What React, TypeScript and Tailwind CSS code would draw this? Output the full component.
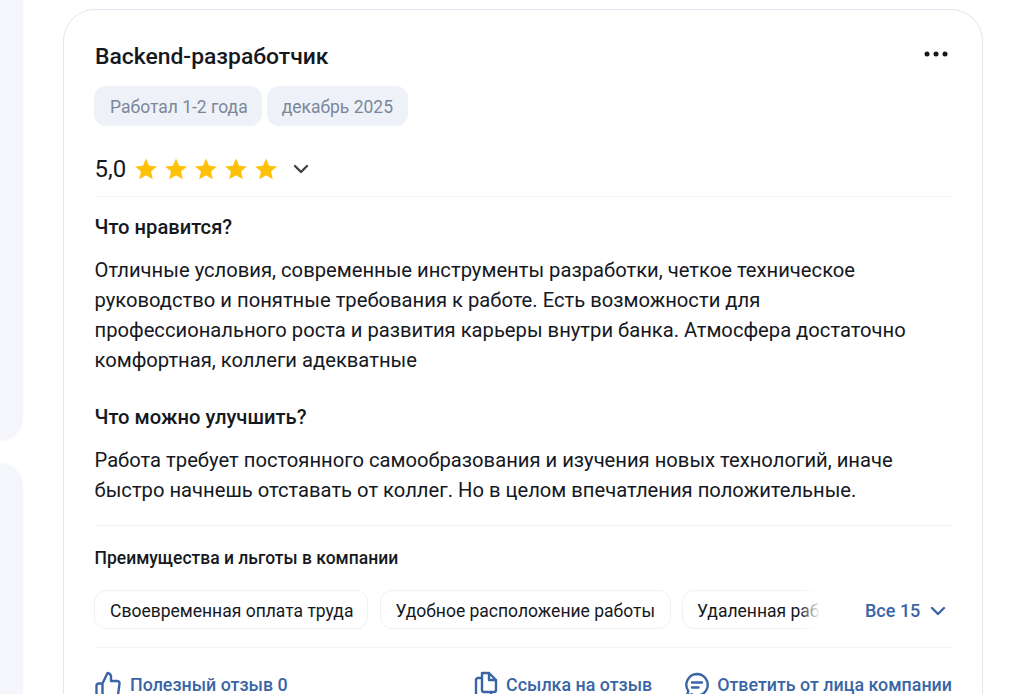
import React from 'react';

const Star: React.FC = () => (
  <svg width="24" height="24" viewBox="0 0 24 24" className="shrink-0 mr-[6px]">
    <path d="M12 1.6l3.1 7.2 7.8.7-5.9 5.1 1.8 7.6L12 18.2l-6.8 4 1.8-7.6-5.9-5.1 7.8-.7z" fill="#ffc107" />
  </svg>
);

const Chevron: React.FC<{ color: string }> = ({ color }) => (
  <svg width="16" height="10" viewBox="0 0 16 10" fill="none">
    <path d="M2 2l6 6 6-6" stroke={color} strokeWidth="2.4" strokeLinecap="round" strokeLinejoin="round" />
  </svg>
);

const Chip: React.FC<{ children: React.ReactNode; className?: string }> = ({ children, className }) => (
  <div className={`h-[39px] shrink-0 rounded-[12px] border border-[#eef1f8] flex items-center text-[17.5px] pt-[3px] text-[#15181e] whitespace-nowrap ${className ?? ''}`}>
    {children}
  </div>
);

const App: React.FC = () => {
  return (
    <div className="h-[694px] w-full overflow-hidden bg-white flex font-['Roboto',sans-serif] text-[#15181e]">
      <div className="w-[23px] shrink-0 flex flex-col gap-[22px]">
        <div className="h-[441px] shrink-0 bg-[#f4f6fb] rounded-br-[24px]" />
        <div className="flex-1 bg-[#f4f6fb] rounded-tr-[24px]" />
      </div>

      <div className="ml-[40px] mt-[9px] w-[920px] h-[760px] shrink-0 border border-[#e1e5ef] rounded-[32px] pl-[31px] pr-[30px] pt-[30px]">
        <div className="flex items-start justify-between">
          <div className="text-[22.9px] leading-[34px] font-medium">Backend-разработчик</div>
          <svg width="24" height="6" viewBox="0 0 24 6" className="mr-[4px] mt-[11px]">
            <circle cx="3" cy="3" r="2.5" fill="#15181e" />
            <circle cx="12" cy="3" r="2.5" fill="#15181e" />
            <circle cx="21" cy="3" r="2.5" fill="#15181e" />
          </svg>
        </div>

        <div className="flex gap-[5px] mt-[12px] -ml-px">
          <div className="h-[40px] rounded-[12px] bg-[#eef1f8] pl-[16px] pr-[14px] pt-[2px] flex items-center text-[17.5px] text-[#7b8799]">Работал 1-2 года</div>
          <div className="h-[40px] rounded-[12px] bg-[#eef1f8] px-[15px] pt-[2px] flex items-center text-[17.5px] text-[#7b8799]">декабрь 2025</div>
        </div>

        <div className="flex items-center mt-[26px] h-[34px]">
          <span className="text-[24px] mr-[8px] -ml-[0.5px]">5,0</span>
          <Star /><Star /><Star /><Star /><Star />
          <span className="ml-[9px] flex"><Chevron color="#3f4349" /></span>
        </div>

        <div className="h-px bg-[#f1f3f8] mt-[10px]" />

        <div className="text-[20.2px] leading-[30px] font-medium mt-[15px] -ml-[0.5px]">Что нравится?</div>
        <p className="text-[20.2px] leading-[30px] mt-[13px] -ml-[0.5px]">
          Отличные условия, современные инструменты разработки, четкое техническое<br />
          руководство и понятные требования к работе. Есть возможности для<br />
          профессионального роста и развития карьеры внутри банка. Атмосфера достаточно<br />
          комфортная, коллеги адекватные
        </p>

        <div className="text-[20.2px] leading-[30px] font-medium mt-[27px] -ml-[0.5px]">Что можно улучшить?</div>
        <p className="text-[20.2px] leading-[30px] mt-[13px] -ml-[0.5px]">
          Работа требует постоянного самообразования и изучения новых технологий, иначе<br />
          быстро начнешь отставать от коллег. Но в целом впечатления положительные.
        </p>

        <div className="h-px bg-[#f1f3f8] mt-[20px]" />

        <div className="text-[17.5px] leading-[24px] font-medium mt-[20px] -ml-[0.5px]">Преимущества и льготы в компании</div>

        <div className="relative flex gap-[12px] mt-[20px] -ml-px h-[39px] overflow-hidden">
          <Chip className="pl-[15px] pr-[14px]">Своевременная оплата труда</Chip>
          <Chip className="pl-[14px] pr-[15px]">Удобное расположение работы</Chip>
          <Chip className="-ml-px px-[14px]">Удаленная работа</Chip>
          <div className="absolute right-0 top-0 h-full w-[132px] bg-white flex items-center pl-[45px] pt-[2px] gap-[10px] text-[18px] font-medium text-[#3a65a5]">
            <div className="absolute -left-[20px] top-0 h-full w-[20px] bg-gradient-to-r from-white/0 to-white" />
            <span className="whitespace-nowrap">Все 15</span>
            <Chevron color="#3a65a5" />
          </div>
        </div>

        <div className="h-px bg-[#f1f3f8] mt-[18px]" />

        <div className="flex items-center mt-[23px] text-[17.85px] font-medium text-[#3a65a5] whitespace-nowrap">
          <svg width="26" height="28" viewBox="0 0 26 28" fill="none" className="shrink-0 mr-[9px]">
            <path d="M7.5 12.5V26H3.5a2 2 0 0 1-2-2V14.5a2 2 0 0 1 2-2h4l5-10.5a3.6 3.6 0 0 1 3.5 3.6V10h6.2a2.3 2.3 0 0 1 2.3 2.7L23 24a2.4 2.4 0 0 1-2.4 2H7.5" stroke="#3a65a5" strokeWidth="2.4" strokeLinejoin="round" strokeLinecap="round" />
          </svg>
          <span>Полезный отзыв 0</span>
          <svg width="24" height="28" viewBox="0 0 24 28" fill="none" className="shrink-0 ml-auto mr-[8px]">
            <path d="M8 2h7l7 7v10a2 2 0 0 1-2 2H10a2 2 0 0 1-2-2V2zM15 2v7h7M8 7H4a2 2 0 0 0-2 2v15a2 2 0 0 0 2 2h11a2 2 0 0 0 2-2v-3" stroke="#3a65a5" strokeWidth="2.4" strokeLinejoin="round" strokeLinecap="round" />
          </svg>
          <span>Ссылка на отзыв</span>
          <svg width="26" height="28" viewBox="0 0 26 28" fill="none" className="shrink-0 ml-[32px] mr-[7px]">
            <path d="M13 3a10.8 10.8 0 1 1-5.2 20.3L3 24.6l1.3-4.7A10.8 10.8 0 0 1 13 3z" stroke="#3a65a5" strokeWidth="2.4" strokeLinejoin="round" />
            <path d="M8 11.5h10M8 16.5h6.5" stroke="#3a65a5" strokeWidth="2.4" strokeLinecap="round" />
          </svg>
          <span>Ответить от лица компании</span>
        </div>
      </div>
    </div>
  );
};

export default App;
